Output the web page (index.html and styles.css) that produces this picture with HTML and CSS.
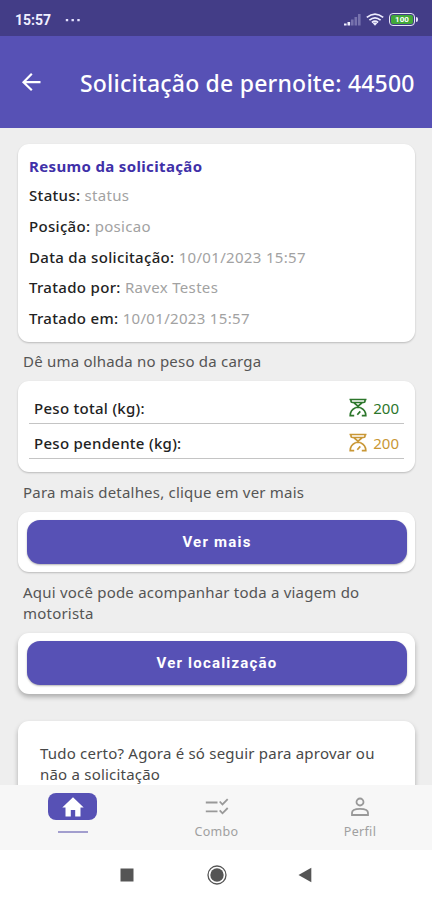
FILE: index.html
```html
<!DOCTYPE html>
<html lang="pt-BR">
<head>
<meta charset="utf-8">
<title>Solicitação de pernoite</title>
<link rel="stylesheet" href="styles.css">
</head>
<body>
<div class="screen">
  <div class="status-bar">
    <span class="time">15:57</span>
    <svg class="dots" width="16" height="4" viewBox="0 0 16 4"><path d="M.8 1h2.400v2.200H.8zM6.500 1h2.400v2.200H6.500zM12.300 1h2.400v2.200h-2.400z"/></svg>
    <svg class="signal" width="17" height="13" viewBox="0 0 17 13"><path d="M0 12.500v-2h2.600v2zM3.500 12.500v-3.500h2.600v3.500z" fill="#f0efff"/><path d="M7 12.500V6.500h2.600v6zM10.500 12.500V4h2.600v8.500zM14 12.500V1h2.600v11.500z" fill="#7772ad"/></svg>
    <svg class="wifi" width="18" height="13" viewBox="0 0 18 13"><g fill="none" stroke="#eeedff" stroke-width="1.700"><path d="M.8 4.400Q9-2.300 17.200 4.400M3.400 7.100Q9 2.500 14.600 7.100M5.900 9.500Q9 7 12.100 9.500"/></g><path d="M6.800 10.300Q9 8.700 11.200 10.300L9 12.800z" fill="#eeedff"/></svg>
    <span class="battery"><span class="level">100</span></span>
  </div>
  <header class="app-bar">
    <svg class="back" width="20" height="20" viewBox="0 0 20 20"><path d="M19.500 10.200H2.500M10.800 1.800 2.500 10.200l8.300 8.100" fill="none" stroke="#fff" stroke-width="2.200"/></svg>
    <h1>Solicitação de pernoite: 44500</h1>
  </header>
  <main class="content">
    <section class="card summary">
      <h2>Resumo da solicitação</h2>
      <p>Status: <span>status</span></p>
      <p>Posição: <span>posicao</span></p>
      <p>Data da solicitação: <span>10/01/2023 15:57</span></p>
      <p>Tratado por: <span>Ravex Testes</span></p>
      <p>Tratado em: <span>10/01/2023 15:57</span></p>
    </section>
    <p class="hint">Dê uma olhada no peso da carga</p>
    <section class="card weights">
      <div class="weight-row">
        <span>Peso total (kg):</span>
        <span class="weight total"><svg width="18" height="19" viewBox="0 0 18 19"><path d="M.5 1.500h17M2 2v1.200q0 1.300 1.500 1.300h11q1.500 0 1.500-1.300V2M5 4.800 9 8.200l4-3.400M9 7v2.500M6.500 9.500h5M6.500 9.800Q1.200 12 1.200 17.700h4M11.500 9.800q5.300 2.200 5.300 7.900h-4M8.300 16.800l3-3.400"/></svg>200</span>
      </div>
      <div class="weight-row">
        <span>Peso pendente (kg):</span>
        <span class="weight pending"><svg width="18" height="19" viewBox="0 0 18 19"><path d="M.5 1.500h17M2 2v1.200q0 1.300 1.500 1.300h11q1.500 0 1.500-1.300V2M5 4.800 9 8.200l4-3.400M9 7v2.500M6.500 9.500h5M6.500 9.800Q1.200 12 1.200 17.700h4M11.500 9.800q5.300 2.200 5.300 7.900h-4M8.300 16.800l3-3.400"/></svg>200</span>
      </div>
    </section>
    <p class="hint details">Para mais detalhes, clique em ver mais</p>
    <section class="card action"><button>Ver mais</button></section>
    <p class="hint wrap">Aqui você pode acompanhar toda a viagem do<br>motorista</p>
    <section class="card action raised"><button>Ver localização</button></section>
    <section class="card approve raised"><p>Tudo certo? Agora é só seguir para aprovar ou<br>não a solicitação</p></section>
  </main>
  <nav class="tabs">
    <div class="tab active">
      <span class="pill"><svg width="22" height="20" viewBox="0 0 22 20"><path d="M11 .3 21.700 10.500H18.500V19.500H13.200V13H8.800v6.500H3.500v-9H.3z" fill="#fff"/></svg></span>
      <span class="indicator"></span>
    </div>
    <div class="tab">
      <svg width="24" height="20" viewBox="0 0 24 20"><path d="M.8 5.500h11.700M.8 14.300h11.700M14.700 4.500l2.800 3 5.200-5.300M14.700 13.300l2.800 3 5.200-5.300" fill="none" stroke="#999" stroke-width="1.800"/></svg>
      <span>Combo</span>
    </div>
    <div class="tab">
      <svg width="20" height="20" viewBox="0 0 20 20"><g fill="none" stroke="#999" stroke-width="1.800"><circle cx="10" cy="5" r="3.500"/><path d="M2 18v-2.200c0-2.700 4-4 8-4s8 1.300 8 4V18z"/></g></svg>
      <span>Perfil</span>
    </div>
  </nav>
  <div class="system-nav">
    <svg width="14" height="14" viewBox="0 0 14 14"><path d="M.5.500h13v13H.5z" fill="#555"/></svg>
    <svg width="20" height="20" viewBox="0 0 20 20"><circle cx="10" cy="10" r="9" fill="none" stroke="#555" stroke-width="1.300"/><circle cx="10" cy="10" r="6.700" fill="#555"/></svg>
    <svg width="14" height="16" viewBox="0 0 14 16"><path d="M.5 8 13.300.8v14.400z" fill="#555"/></svg>
  </div>
</div>
</body>
</html>
```
FILE: styles.css
```css
* { box-sizing: border-box; margin: 0; padding: 0; }
body { background: #eee; font-family: "Noto Sans", sans-serif; font-size: 15px; }
svg { display: block; flex: none; }
.screen { width: 432px; height: 900px; display: flex; flex-direction: column; overflow: hidden; }
.status-bar { height: 36px; flex: none; background: #433d87; display: flex; align-items: center; padding: 3px 17px 0 15px; color: #f0efff; }
.time { font: 700 14px/16px Roboto, sans-serif; }
.dots { margin-left: 14px; fill: #e4e2ff; }
.signal { margin-left: auto; }
.wifi { margin-left: 5px; }
.battery { width: 26px; height: 13px; margin-left: 5px; border: 1.500px solid #e7e5f7; border-radius: 4px; padding: 1px; position: relative; }
.battery::after { content: ""; position: absolute; right: -4px; top: 3px; width: 2px; height: 5px; background: #e7e5f7; border-radius: 0 2px 2px 0; }
.level { display: block; height: 9px; border-radius: 2px; background: #42a839; color: #fff; font: 700 8px/9px Roboto, sans-serif; text-align: center; }
.app-bar { height: 92px; flex: none; background: #5751b5; display: flex; align-items: center; padding-left: 21px; color: #fff; }
h1 { margin: 1px 0 0 39px; font-size: 23px; font-weight: 500; line-height: 32px; letter-spacing: .21px; white-space: nowrap; }
.content { flex: 1; min-height: 0; overflow: hidden; padding: 16px 17px 0 18px; }
.card { background: #fff; border-radius: 11px; box-shadow: 0 1px 2px rgba(0,0,0,.22); }
.raised { box-shadow: 0 3px 5px rgba(0,0,0,.28); }
.summary { height: 198px; padding: 12px 11px; }
h2 { font-size: 15px; line-height: 21px; font-weight: 700; color: #4030a8; letter-spacing: .35px; margin-bottom: 3px; }
.summary p { line-height: 30.800px; color: #222; font-weight: 500; letter-spacing: .32px; white-space: nowrap; }
.summary p span { color: #a2a2a2; font-weight: 400; }
.hint { padding: 9px 5px; line-height: 21px; color: #555; letter-spacing: .21px; white-space: nowrap; }
.hint.details { padding: 10px 5px 9px; }
.hint.wrap { padding: 10px 5px 9px; }
.weights { height: 91px; padding: 8px 11px 0; }
.weight-row { height: 35px; border-bottom: 1px solid #c4c4c4; display: flex; align-items: center; justify-content: space-between; padding: 3px 5px 0; color: #222; font-weight: 500; letter-spacing: .28px; }
.weight { display: flex; align-items: center; gap: 6px; font-weight: 400; letter-spacing: 0; }
.weight svg { fill: none; stroke: currentColor; stroke-width: 1.700; }
.total { color: #2c762b; }
.pending { color: #c99735; }
.action { height: 60px; padding: 8px 8px 0 9px; }
.action.raised { height: 61px; }
button { display: block; width: 100%; height: 44px; border: 0; border-radius: 13px; background: #5751b5; color: #fff; font: 700 15px/44px Roboto, sans-serif; letter-spacing: 1.200px; box-shadow: 0 1px 2px rgba(0,0,0,.3); }
.approve { margin-top: 27px; height: 120px; padding: 22px 22px; line-height: 21px; color: #484848; letter-spacing: .21px; white-space: nowrap; }
.tabs { height: 65px; flex: none; background: #f7f7f7; display: grid; grid-template-columns: 145px 143px 144px; position: relative; }
.tab { display: flex; flex-direction: column; align-items: center; padding-top: 12px; color: #a0a0a0; font-size: 12.500px; line-height: 18px; letter-spacing: .3px; gap: 6px; }
.tab.active { padding-top: 8px; gap: 11px; }
.pill { width: 49px; height: 27px; border-radius: 8px; background: #5751b5; display: flex; align-items: center; justify-content: center; }
.indicator { width: 30px; height: 2px; background: #a29ece; }
.system-nav { height: 50px; flex: none; background: #fff; display: flex; align-items: center; padding-left: 120px; }
.system-nav svg + svg { margin-left: 73px; }
.system-nav svg:last-child { margin-left: 71px; }
```
